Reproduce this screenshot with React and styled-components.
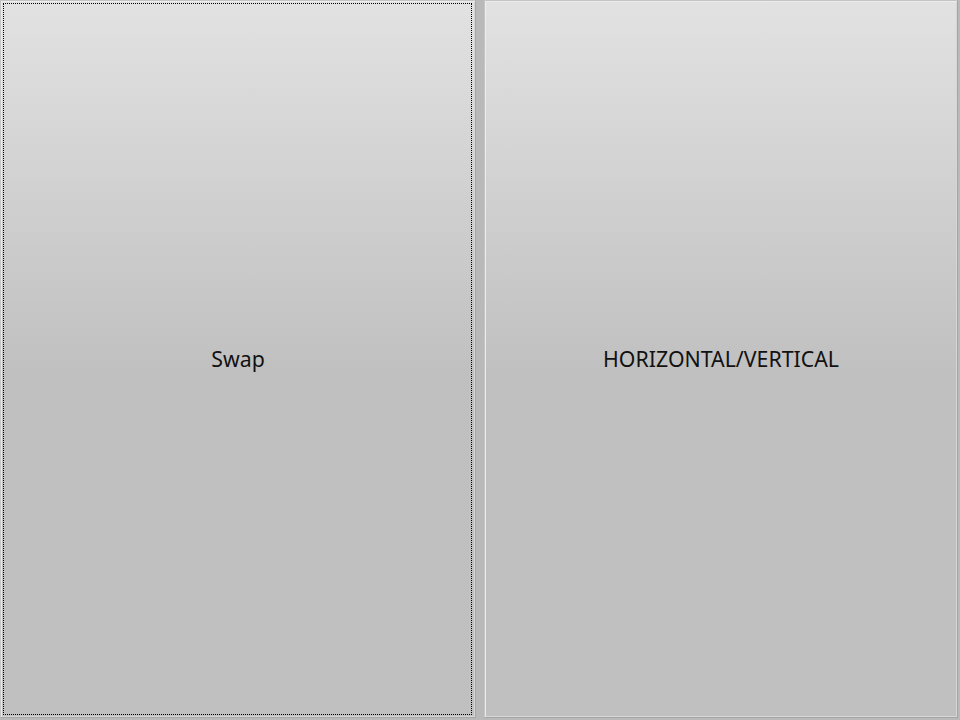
import React from "react";
import styled, { createGlobalStyle } from "styled-components";

const Global = createGlobalStyle`
  html, body { margin: 0; padding: 0; background: #b9b9b9; }
  body { width: 960px; height: 720px; overflow: hidden; }
`;

const Row = styled.div`
  display: flex;
  gap: 8px;
  width: 960px;
  height: 718px;
  padding-right: 2px;
  box-sizing: border-box;
`;

const Button = styled.button`
  flex: 0 0 ${(p) => p.$w}px;
  height: 100%;
  box-sizing: border-box;
  margin: 0;
  padding: 0 0 2px 0;
  border: 1px solid #a6a6a6;
  border-top-color: #c4c4c4;
  border-left-color: #c4c4c4;
  box-shadow: inset 1px 1px 0 #ececec, inset -1px -1px 0 #d6d6d6;
  background: linear-gradient(to bottom, #e2e2e2 0%, #c0c0c0 52%, #c0c0c0 100%);
  font-family: "Noto Sans", "Open Sans", sans-serif;
  font-size: 21.3px;
  color: #111;
  position: relative;
  cursor: default;
  outline: none;
  &::after {
    content: "";
    display: ${(p) => (p.$focus ? "block" : "none")};
    position: absolute;
    left: 2px;
    top: 2px;
    right: 3px;
    bottom: 2px;
    border: 1px dotted #000;
  }
`;

export default function App() {
  return (
    <>
      <Global />
      <Row>
        <Button $w={476} $focus>
          Swap
        </Button>
        <Button $w={474}>HORIZONTAL/VERTICAL</Button>
      </Row>
    </>
  );
}
